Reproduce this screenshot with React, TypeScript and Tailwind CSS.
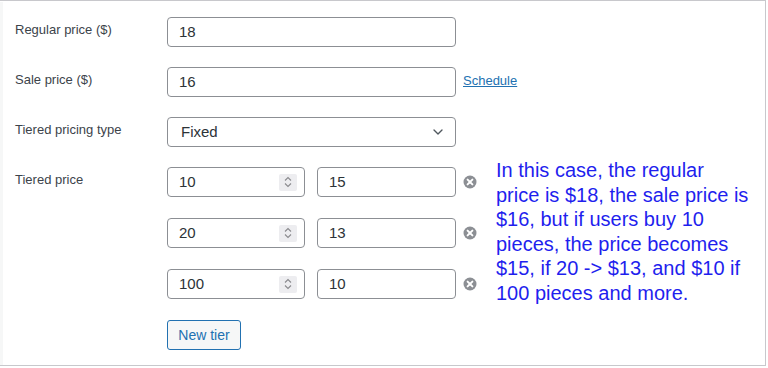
import { ChevronDown } from "lucide-react";

const tiers = [
  { qty: "10", price: "15" },
  { qty: "20", price: "13" },
  { qty: "100", price: "10" },
];

function Label({ children }: { children: React.ReactNode }) {
  return (
    <div className="w-[152px] shrink-0 pt-[3px] text-[13px] text-[#3c434a]">
      {children}
    </div>
  );
}

function TextBox({ value, className = "" }: { value: string; className?: string }) {
  return (
    <div
      className={`flex h-[30px] items-center rounded-[4px] border border-[#8c8f94] bg-white px-[11px] text-[15px] text-[#2c3338] ${className}`}
    >
      {value}
    </div>
  );
}

function Spinner() {
  return (
    <div className="flex h-[17px] w-[18px] flex-col items-center justify-center rounded-[2px] bg-[#ededf0]">
      <svg width="8" height="12" viewBox="0 0 8 12" fill="none" stroke="#8a8a8e" strokeWidth="1.1">
        <path d="M1 4.5 L4 1.5 L7 4.5" />
        <path d="M1 7.5 L4 10.5 L7 7.5" />
      </svg>
    </div>
  );
}

function RemoveIcon() {
  return (
    <svg width="14" height="14" viewBox="0 0 14 14" className="shrink-0">
      <circle cx="7" cy="7" r="6.5" fill="#8c8f94" />
      <path d="M4.6 4.6 L9.4 9.4 M9.4 4.6 L4.6 9.4" stroke="#fff" strokeWidth="2" strokeLinecap="round" />
    </svg>
  );
}

export default function App() {
  return (
    <div className="h-[368px] w-[768px] bg-white" style={{ fontFamily: '"Liberation Sans", Arial, sans-serif' }}>
      <div className="flex h-[366px] w-[766px] border-r border-b border-t border-[#c8c8cc] pt-[1px]">
        <div className="w-[3px] shrink-0 bg-[#f6f7f7]" />
        <div className="flex-1 pl-[12px] pt-[15px]">
          {/* Regular price */}
          <div className="flex">
            <Label>Regular price ($)</Label>
            <TextBox value="18" className="w-[289px]" />
          </div>

          {/* Sale price */}
          <div className="mt-[20px] flex items-start">
            <Label>Sale price ($)</Label>
            <TextBox value="16" className="w-[289px]" />
            <a className="ml-[7px] pt-[4px] text-[13px] text-[#2271b1] underline">Schedule</a>
          </div>

          {/* Tiered pricing type */}
          <div className="mt-[20px] flex">
            <Label>Tiered pricing type</Label>
            <div className="flex h-[30px] w-[289px] items-center justify-between rounded-[4px] border border-[#8c8f94] bg-white pl-[13px] pr-[9px] text-[15px] text-[#2c3338]">
              <span>Fixed</span>
              <ChevronDown size={16} strokeWidth={2} color="#50575e" />
            </div>
          </div>

          {/* Tiered price */}
          <div className="mt-[20px] flex">
            <Label>Tiered price</Label>
            <div className="flex flex-col">
              <div className="flex flex-col gap-[21px]">
                {tiers.map((t) => (
                  <div key={t.qty} className="flex items-center">
                    <div className="flex h-[30px] w-[138px] items-center justify-between rounded-[4px] border border-[#8c8f94] bg-white pl-[11px] pr-[7px] text-[15px] text-[#2c3338]">
                      <span>{t.qty}</span>
                      <Spinner />
                    </div>
                    <TextBox value={t.price} className="ml-[12px] w-[139px]" />
                    <div className="ml-[7px]">
                      <RemoveIcon />
                    </div>
                  </div>
                ))}
              </div>
              <button className="mt-[21px] h-[30px] w-[74px] rounded-[3px] border border-[#2271b1] bg-[#f6f7f7] text-[14px] text-[#2271b1]">
                New tier
              </button>
            </div>
            <p className="ml-[19px] -mt-[9px] text-[20px] leading-[24.5px] text-[#1f1fee]">
              In this case, the regular
              <br />
              price is $18, the sale price is
              <br />
              $16, but if users buy 10
              <br />
              pieces, the price becomes
              <br />
              $15, if 20 -&gt; $13, and $10 if
              <br />
              100 pieces and more.
            </p>
          </div>
        </div>
      </div>
    </div>
  );
}
